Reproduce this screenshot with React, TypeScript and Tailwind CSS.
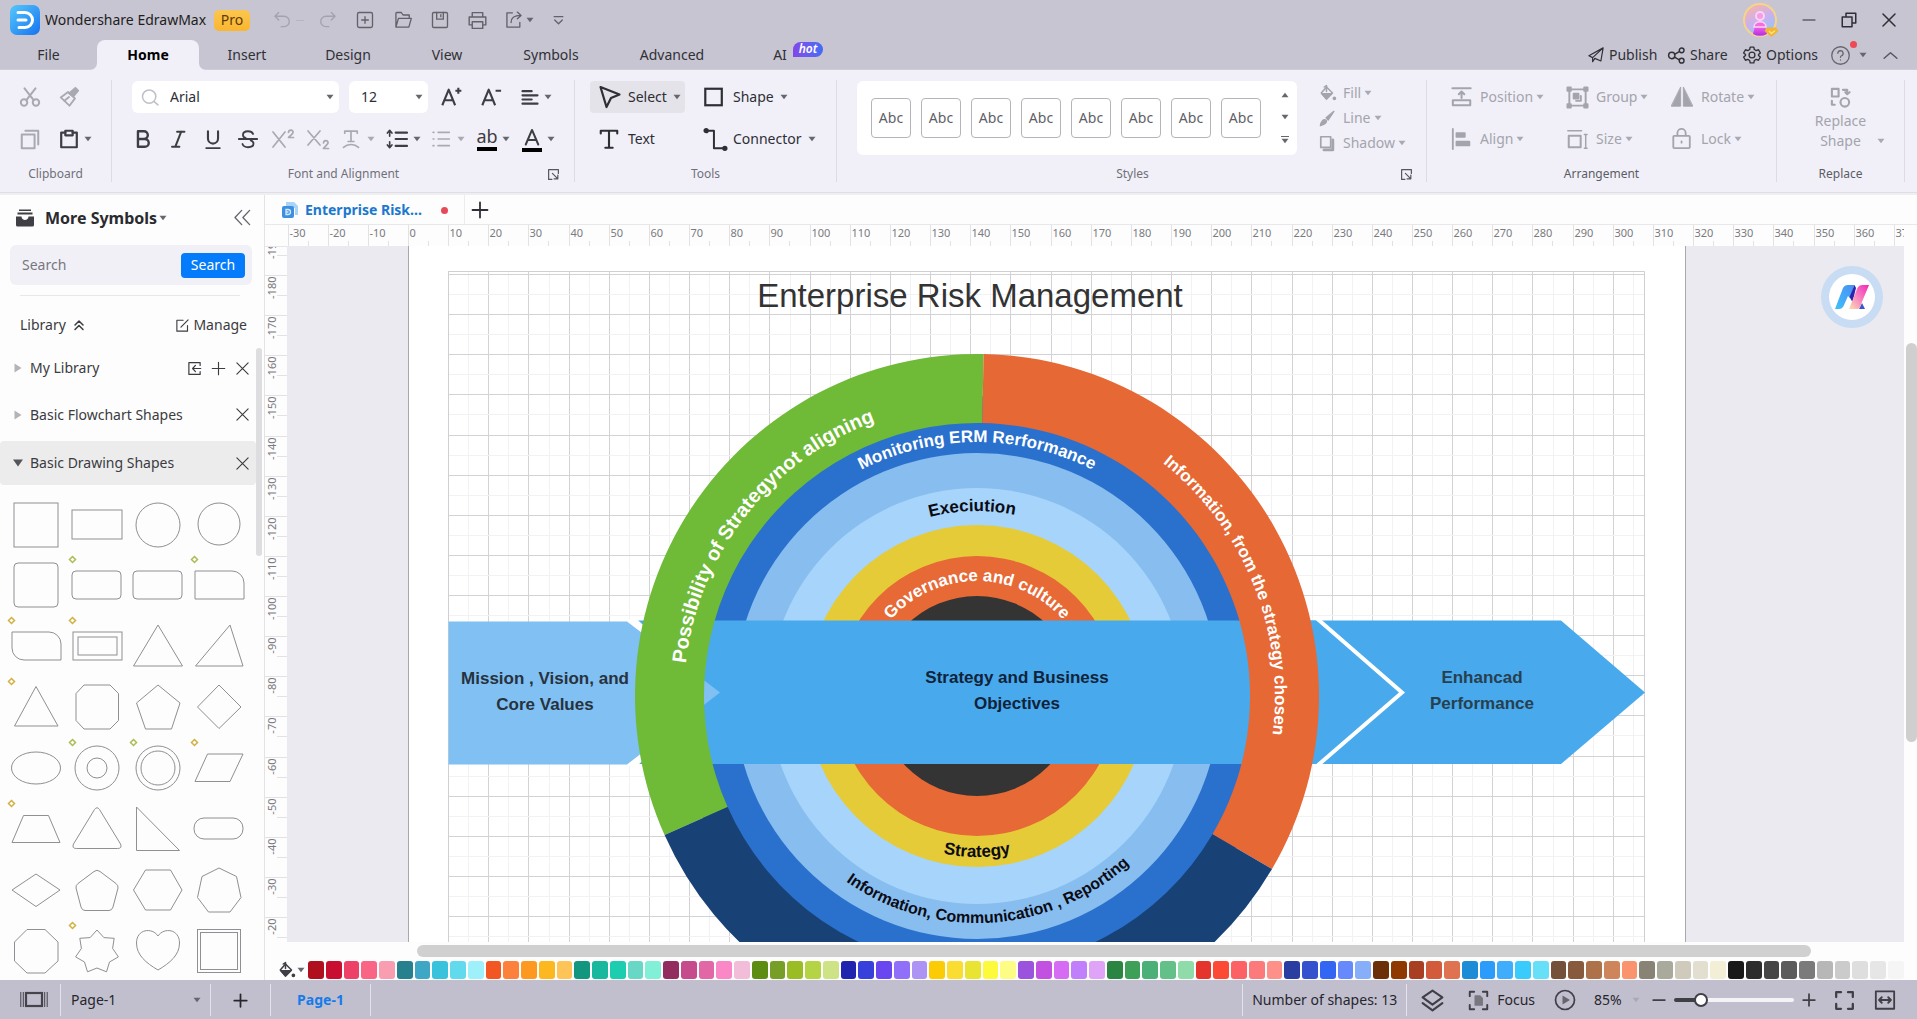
import React from "react";
import type { ReactNode } from "react";

/* ---------- small building blocks ---------- */

function Caret({ dim = false, up = false }: { dim?: boolean; up?: boolean }) {
  return (
    <svg width="8" height="6" viewBox="0 0 8 6" className={dim ? "shrink-0 text-[#a9a9b3]" : "shrink-0 text-[#66666e]"} aria-hidden="true">
      <path d={up ? "M0.5 5.2h7L4 0.8z" : "M0.5 0.8h7L4 5.2z"} fill="currentColor" />
    </svg>
  );
}

function Icon({ size = 22, w = 1.6, children, className = "" }: { size?: number; w?: number; children: ReactNode; className?: string }) {
  return (
    <svg
      width={size}
      height={size}
      viewBox="0 0 24 24"
      fill="none"
      stroke="currentColor"
      strokeWidth={w}
      strokeLinecap="round"
      strokeLinejoin="round"
      className={"shrink-0 " + className}
      aria-hidden="true"
    >
      {children}
    </svg>
  );
}

const SANS = 'font-["Noto_Sans",sans-serif]';

function IconButton({ label, className, children, disabled }: { label: string; className: string; children: ReactNode; disabled?: boolean }) {
  return (
    <button aria-label={label} disabled={disabled} className={"flex h-8 shrink-0 items-center " + (disabled ? "text-[#a9a9b1] " : "text-[#3d3d44] ") + className}>
      {children}
    </button>
  );
}

function Launcher() {
  return (
    <button aria-label="More settings" className="text-[#55555c]">
      <Icon size={13} w={2.2}>
        <path d="M21 10V3H3v18h6M10 10l10 10M20 13v7h-7" />
      </Icon>
    </button>
  );
}

/* ---------- title bar ---------- */

function TitleBar() {
  return (
    <header className="flex h-10 shrink-0 items-center pl-[10px] text-[#62626a]">
      <svg width="30" height="32" viewBox="0 0 30 32" aria-hidden="true">
        <defs>
          <linearGradient id="logo" x1="0" y1="0" x2="1" y2="1">
            <stop offset="0" stopColor="#55c8fb" />
            <stop offset="1" stopColor="#1673f0" />
          </linearGradient>
        </defs>
        <rect x="0" y="1" width="30" height="30" rx="7" fill="url(#logo)" />
        <path d="M8 8.5h7a7.5 7.5 0 0 1 0 15H9M8 16h8" fill="none" stroke="#fff" strokeWidth="3" strokeLinecap="round" />
      </svg>
      <h1 className="ml-[5px] w-[160px] whitespace-nowrap text-sm text-[#1d1d22]">Wondershare EdrawMax</h1>
      <span className="ml-[9px] flex h-[21px] w-9 items-center justify-center rounded-[5px] bg-gradient-to-b from-[#fbc64f] to-[#fbb62c] text-sm text-[#5e3a0c]">Pro</span>
      <button aria-label="Undo" className="ml-[22px] flex w-[38px] items-center gap-1 text-[#a3a2ad]">
        <Icon size={20}><path d="M8 3L3.500 7.500 8 12M4 7.500h10.500a5.500 5.500 0 0 1 0 12.500H11" /></Icon>
        <span className="h-px w-2 bg-[#b5b4c0]" />
      </button>
      <button aria-label="Redo" className="ml-[8px] w-[37px] text-[#a3a2ad]">
        <Icon size={20}><path d="M16 3l4.500 4.500L16 12M20 7.500H9.500a5.500 5.500 0 0 0 0 12.500H13" /></Icon>
      </button>
      <button aria-label="New" className="w-[38px]">
        <Icon size={20}><rect x="3" y="3" width="18" height="18" rx="2" /><path d="M12 8v8M8 12h8" /></Icon>
      </button>
      <button aria-label="Open" className="w-[37px]">
        <Icon size={20}><path d="M3.500 20.500V4a1 1 0 0 1 1-1H10l2 3h7.500v4M3.500 20.500L6.500 10H22l-3 10.500z" /></Icon>
      </button>
      <button aria-label="Save" className="w-[37px]">
        <Icon size={20}><rect x="3" y="3" width="18" height="18" rx="1.500" /><path d="M8 3v8h8V3M13 5.500v2.500" /></Icon>
      </button>
      <button aria-label="Print" className="w-[37px]">
        <Icon size={21}><path d="M6 8V3h12v5M6 17H2.500V8h19v9H18M6 13.500h12V21H6z" /></Icon>
      </button>
      <button aria-label="Export" className="flex w-[48px] items-center gap-[2px]">
        <Icon size={20}><path d="M10 3.500H3.500v17H19V15M8.500 15c0-6 4-8.500 11.500-8.500M16 2.500l4.500 4L16 10.500" /></Icon>
        <Caret />
      </button>
      <button aria-label="Customize quick access">
        <Icon size={13} w={2.4}><path d="M4 5h16M5 11l7 7 7-7" /></Icon>
      </button>

      <div className="flex-1" />
      <button aria-label="Account" className="mr-5">
        <svg width="38" height="38" viewBox="0 0 38 38" aria-hidden="true">
          <defs>
            <linearGradient id="avatar" x1="0.2" y1="0" x2="0.7" y2="1">
              <stop offset="0" stopColor="#fbb3a5" />
              <stop offset="0.5" stopColor="#c9b1ee" />
              <stop offset="1" stopColor="#8fc8f8" />
            </linearGradient>
            <linearGradient id="torso" x1="0" y1="0" x2="0" y2="1">
              <stop offset="0" stopColor="#f76ae0" />
              <stop offset="1" stopColor="#b42be8" />
            </linearGradient>
          </defs>
          <circle cx="18" cy="19" r="16" fill="url(#avatar)" stroke="#f6d48a" strokeWidth="2" />
          <path d="M11 33l2-8h10l2 8a15 15 0 0 1-14 0z" fill="url(#torso)" />
          <circle cx="18" cy="15" r="4" fill="#f79be6" stroke="#fbd3f4" strokeWidth="2" />
          <path d="M12 26c0-7 12-7 12 0z" fill="#f36fdc" stroke="#fbd3f4" strokeWidth="1.500" />
          <path d="M25 26.500h9l2.500 3.500-7 6-7-6z" fill="#f2b630" />
          <path d="M27 30l2.500 2.500 3.500-3" fill="none" stroke="#fbe08a" strokeWidth="1.500" />
        </svg>
      </button>
      <div className="flex w-[117px] items-center justify-between pr-[19px] text-[#2f2f36]">
        <button aria-label="Minimize"><Icon size={18}><path d="M4 12h16" /></Icon></button>
        <button aria-label="Restore"><Icon size={18} w={2}><path d="M3 8h13v13H3zM8 8V3h13v13h-5" /></Icon></button>
        <button aria-label="Close"><Icon size={18} w={2}><path d="M4 4l16 16M20 4L4 20" /></Icon></button>
      </div>
    </header>
  );
}

/* ---------- menu tabs ---------- */

function MenuTabs() {
  const item = "h-[30px] shrink-0 pt-px text-center text-sm text-[#303037]";
  return (
    <nav className="flex h-[30px] shrink-0 items-center border-b border-[#cfccd8]">
      <button className={item + " w-[97px]"}>File</button>
      <button className="relative h-[30px] w-[102px] shrink-0 rounded-t-lg bg-[#f1f0f8] pt-px text-center text-sm font-bold text-black">
        <svg width="7" height="7" viewBox="0 0 7 7" className="absolute -left-[7px] bottom-0" aria-hidden="true"><path d="M7 0v7H0A7 7 0 0 0 7 0z" fill="#f1f0f8" /></svg>
        Home
        <svg width="7" height="7" viewBox="0 0 7 7" className="absolute -right-[7px] bottom-0" aria-hidden="true"><path d="M0 0v7h7A7 7 0 0 1 0 0z" fill="#f1f0f8" /></svg>
      </button>
      <button className={item + " w-[96px]"}>Insert</button>
      <button className={item + " w-[106px]"}>Design</button>
      <button className={item + " w-[92px]"}>View</button>
      <button className={item + " w-[116px]"}>Symbols</button>
      <button className={item + " w-[126px]"}>Advanced</button>
      <button className={item + " relative w-[90px]"}>
        AI
        <span className="absolute left-[58px] top-[2px] flex h-[15px] w-[30px] items-center justify-center rounded-full rounded-bl-none bg-gradient-to-r from-[#8247ea] to-[#3f6df5] text-xs font-semibold italic text-white">hot</span>
      </button>
      <div className="flex-1" />
      <div className="flex items-center pr-[18px] pt-px text-sm text-[#303037]">
        <button className="flex w-[80px] items-center gap-1">
          <Icon size={18}><path d="M21.500 2.500L2.500 13l5 2.500M21.500 2.500L18.500 20l-8-3.500M21.500 2.500L7.500 15.500V21l3-4.500" /></Icon>
          Publish
        </button>
        <button className="flex w-[75px] items-center gap-1">
          <Icon size={19} w={1.8}><circle cx="6" cy="12" r="4" /><circle cx="18.500" cy="5.500" r="3" /><circle cx="18.500" cy="18.500" r="3" /><path d="M9.500 10.500l6-3.500M9.500 14l6 3.500" /></Icon>
          Share
        </button>
        <button className="flex w-[88px] items-center gap-1">
          <Icon size={20}><path d="M9.800 2.500h4.400l.6 2.900 2.200 1.300 2.800-1 2.200 3.800-2.200 1.900v1.200l2.200 1.900-2.200 3.800-2.800-1-2.200 1.300-.6 2.900H9.800l-.6-2.900L7 17.300l-2.800 1L2 14.500l2.200-1.900v-1.200L2 9.500l2.200-3.800 2.800 1 2.200-1.300z" /><circle cx="12" cy="12" r="3.500" /></Icon>
          Options
        </button>
        <button aria-label="Help" className="relative flex w-[52px] items-center gap-2 text-[#66666e]">
          <Icon size={21} w={1.5}><circle cx="12" cy="12" r="10" /><path d="M9 9.500a3 3 0 1 1 4.200 2.800c-.9.400-1.200.9-1.200 1.700M12 17v.2" /></Icon>
          <span className="absolute left-[20px] top-[-4px] size-[7px] rounded-full bg-[#ee4a56]" />
          <Caret />
        </button>
        <button aria-label="Collapse ribbon" className="text-[#55555c]">
          <Icon size={17} w={2}><path d="M3 16l9-8 9 8" /></Icon>
        </button>
      </div>
    </nav>
  );
}

/* ---------- ribbon ---------- */

function Divider() {
  return <div className="my-[10px] w-px shrink-0 bg-[#dddce5]" />;
}

function GroupLabel({ children, dark = false }: { children: ReactNode; dark?: boolean }) {
  return <div className={"h-5 text-center text-xs leading-5 " + (dark ? "text-[#5c5c64]" : "text-[#707078]")}>{children}</div>;
}

function ToolLabel({ label, icon, caret = true, className = "" }: { label: string; icon: ReactNode; caret?: boolean; className?: string }) {
  return (
    <button className={"flex h-8 items-center text-sm text-[#2e2e35] " + className}>
      <span className="flex w-[30px] justify-start">{icon}</span>
      {label}
      {caret && <span className="ml-[6px] flex"><Caret /></span>}
    </button>
  );
}

function DimLabel({ label, icon, className = "" }: { label: string; icon: ReactNode; className?: string }) {
  return (
    <button disabled className={"flex items-center text-sm text-[#a4a4ad] " + className}>
      {icon}
      <span>{label}</span>
      <span className="ml-[3px] flex"><Caret dim /></span>
    </button>
  );
}

function Ribbon() {
  return (
    <section aria-label="Home ribbon" className="flex h-[123px] shrink-0 border-b border-[#dfdfe4] bg-[#f1f0f8]">
      {/* Clipboard */}
      <div className="flex w-[111px] shrink-0 flex-col pt-[11px]">
        <div className="flex pl-[19px]">
          <IconButton label="Cut" className="w-[39px]" disabled>
            <Icon size={22} w={2.2}><circle cx="5.500" cy="18" r="3.500" /><circle cx="18.500" cy="18" r="3.500" /><path d="M8 15.500L18 2.500M16 15.500L6 2.500" /></Icon>
          </IconButton>
          <IconButton label="Format painter" className="w-8" disabled>
            <Icon size={22} w={2}><path d="M12 8l7-6 3 3-5.500 6.500z" fill="currentColor" /><path d="M3 12.500l8-6 7.500 7-6 8z" /><path d="M7 16l5-4" /></Icon>
          </IconButton>
        </div>
        <div className="mt-[10px] flex pl-[19px]">
          <IconButton label="Copy" className="w-[39px]" disabled>
            <Icon size={22} w={2.2}><path d="M3 7h14v15H3zM7 3h14v15" /></Icon>
          </IconButton>
          <IconButton label="Paste" className="w-[40px] gap-1">
            <Icon size={22} w={2.4}><path d="M8 5H3.500v16h17V5H16" /><path d="M8 3h8v5H8z" /></Icon>
            <Caret />
          </IconButton>
        </div>
        <div className="mt-[9px]"><GroupLabel>Clipboard</GroupLabel></div>
      </div>
      <Divider />

      {/* Font and alignment */}
      <div className="flex w-[462px] shrink-0 flex-col pt-[11px]">
        <div className="flex items-center pl-5">
          <div className="flex h-8 w-[207px] items-center rounded-md bg-white pl-2 pr-[5px]">
            <span className="text-[#c0c0c8]"><Icon size={20} w={1.8}><circle cx="11" cy="11.500" r="8" /><path d="M17 17.500l4.500 4" /></Icon></span>
            <input aria-label="Font family" defaultValue="Arial" className="ml-[10px] w-full min-w-0 bg-transparent text-sm text-[#2e2e35] outline-none" />
            <Caret />
          </div>
          <div className="ml-[10px] flex h-8 w-[79px] items-center rounded-md bg-white pr-[5px]">
            <select aria-label="Font size" className="w-full appearance-none bg-transparent pl-3 text-sm text-[#2e2e35] outline-none">
              <option>12</option>
              <option>14</option>
            </select>
            <Caret />
          </div>
          <IconButton label="Grow font" className="ml-3 w-10">
            <Icon size={22} w={2.3}><path d="M2.500 21L9.500 4l7 17M5 15.500h9M20 2v6.500M16.800 5.200h6.500" strokeLinecap="butt" /></Icon>
          </IconButton>
          <IconButton label="Shrink font" className="w-10">
            <Icon size={22} w={2.3}><path d="M2.500 21L9.500 4l7 17M5 15.500h9M17 5.200h6" strokeLinecap="butt" /></Icon>
          </IconButton>
          <IconButton label="Paragraph alignment" className="gap-1">
            <Icon size={20} w={2.6}><path d="M3 5h11M3 10h18M3 15h11M3 20h18" /></Icon>
            <Caret />
          </IconButton>
        </div>
        <div className="mt-[10px] flex items-center pl-[13px]">
          <IconButton label="Bold" className="w-[35px] justify-center"><Icon size={22} w={2.6}><path d="M6.500 3.500h6.500a4 4 0 0 1 0 8.500H6.500zM6.500 12h7.500a4.200 4.200 0 0 1 0 8.500H6.500z" /></Icon></IconButton>
          <IconButton label="Italic" className="w-[35px] justify-center"><Icon size={22} w={2.2}><path d="M11 4h8M5.500 20.500h8M15.500 4L9 20.500" /></Icon></IconButton>
          <IconButton label="Underline" className="w-[35px] justify-center"><Icon size={22} w={2.3}><path d="M6.500 3.500v8a5.500 5.500 0 0 0 11 0v-8" /><path d="M4.500 22h15" strokeWidth="1.800" /></Icon></IconButton>
          <IconButton label="Strikethrough" className="w-[35px] justify-center"><Icon size={22} w={2}><path d="M17.500 6.500c-1-2.300-3-3-5.500-3-3.500 0-5.500 1.700-5.500 4 0 1.500 1 2.700 3 3.500M2 12h20M15 13.500c2 .8 3 2 3 3.500 0 2.500-2.500 4-6 4-3 0-5.200-1.200-6-3.500" /></Icon></IconButton>
          <IconButton label="Superscript" className="w-[35px] justify-center" disabled><Icon size={24} w={1.7}><path d="M2 5l12 15M14 5L2 20M17.500 5.500c.3-3.300 5-2.800 4.500 0-.3 1.700-3 3-4.500 5h5" /></Icon></IconButton>
          <IconButton label="Subscript" className="w-[35px] justify-center" disabled><Icon size={24} w={1.7}><path d="M2 4l12 14M14 4L2 18M17.500 16c.3-3.300 5-2.800 4.500 0-.3 1.700-3 3-4.500 5.500h5" /></Icon></IconButton>
          <IconButton label="Text direction" className="ml-[6px] w-[45px] gap-[6px]" disabled><Icon size={20} w={2}><path d="M4.500 5V2.500h15V5M12 2.500V15M8.500 15h7M3 22c5-4.500 13-4.500 18 0" /></Icon><Caret dim /></IconButton>
          <IconButton label="Line spacing" className="w-[45px] gap-[5px]"><Icon size={22} w={2.3}><path d="M10.500 5H23M10.500 12H23M10.500 19.500H23" /><path d="M4 3v6M4 15v6M1.500 5.500L4 2.500l2.500 3M1.500 18.500L4 21.500l2.500-3" strokeWidth="1.800" /></Icon><Caret /></IconButton>
          <IconButton label="Bullets" className="w-[46px] gap-[6px]" disabled><Icon size={20} w={2}><path d="M8.500 4H22M8.500 12H22M8.500 20H22M2.500 4h1M2.500 12h1M2.500 20h1" /></Icon><Caret dim /></IconButton>
          <IconButton label="Highlight" className="w-[45px] gap-[5px]">
            <span className="flex h-6 w-5 items-center justify-center border-b-4 border-black pb-0.5 text-[18px] leading-none">ab</span>
            <Caret />
          </IconButton>
          <IconButton label="Font color" className="gap-[5px]">
            <span className="flex h-[25px] w-5 flex-col justify-between border-b-4 border-black"><Icon size={20} w={2.4}><path d="M4.500 21L12 3.500 19.500 21M7 15.500h10" /></Icon></span>
            <Caret />
          </IconButton>
        </div>
        <div className="mt-[9px] flex items-center">
          <div className="w-[435px] pl-7"><GroupLabel>Font and Alignment</GroupLabel></div>
          <Launcher />
        </div>
      </div>
      <Divider />

      {/* Tools */}
      <div className="flex w-[261px] shrink-0 flex-col pt-[11px]">
        <div className="grid grid-cols-[113px_auto] gap-y-[10px] pl-[15px]">
          <ToolLabel label="Select" className="w-[95px] rounded-sm bg-[#e4e3ea] pl-2" icon={<Icon size={24} w={2.2}><path d="M2.500 2l19 7.500-8.500 3.500-4.500 9z" /></Icon>} />
          <ToolLabel label="Shape" icon={<Icon size={22} w={2.4}><rect x="2.500" y="3" width="18" height="18" strokeLinejoin="miter" /></Icon>} />
          <ToolLabel label="Text" caret={false} className="pl-2" icon={<Icon size={22} w={2.3}><path d="M3 6V3h18v3M12 3v18.500M8 21.500h8" /></Icon>} />
          <ToolLabel label="Connector" icon={<Icon size={25} w={1.9}><path d="M4 3.500h6.500v17H20" /><circle cx="3" cy="3.500" r="1.600" fill="currentColor" /><circle cx="21" cy="20.500" r="1.600" fill="currentColor" /></Icon>} />
        </div>
        <div className="mt-[9px]"><GroupLabel>Tools</GroupLabel></div>
      </div>
      <Divider />

      {/* Styles */}
      <div className="flex w-[589px] shrink-0 flex-col pt-[11px]">
        <div className="flex h-[74px] pl-5">
          <div className="flex w-[440px] items-center rounded-md bg-white pl-[14px]">
            <div className="flex gap-[10px]">
              {Array.from({ length: 8 }, (_, i) => (
                <button key={i} className="h-10 w-10 rounded border border-[#b4b4ba] text-sm text-[#5f5f67]">Abc</button>
              ))}
            </div>
            <div className="ml-[20px] flex h-full flex-col items-center justify-between py-[11px]">
              <button aria-label="Previous styles"><Caret up /></button>
              <button aria-label="Next styles"><Caret /></button>
              <button aria-label="All styles" className="flex flex-col items-center gap-px"><span className="h-px w-2 bg-[#66666e]" /><Caret /></button>
            </div>
          </div>
          <div className="ml-[22px] flex flex-col justify-between">
            <DimLabel label="Fill" className="h-6" icon={<span className="flex w-6"><Icon size={18} w={2}><path d="M10 4l8 8-8 8-7-8z" /><path d="M4 13h13l-7 7z" fill="currentColor" /><path d="M10 10V2L7 4" /><circle cx="20.500" cy="19" r="1.500" fill="currentColor" /></Icon></span>} />
            <DimLabel label="Line" className="h-6" icon={<span className="flex w-6"><Icon size={17} w={2}><path d="M21 2L10 11l3 3z" fill="currentColor" /><path d="M2 22c1-6 4-9 7-8s2 6-7 8z" fill="currentColor" /></Icon></span>} />
            <DimLabel label="Shadow" className="h-6" icon={<span className="flex w-6"><Icon size={17} w={2.4}><path d="M2.500 2.500h14v15h-14z" /><path d="M19.500 7v14H7" strokeWidth="4" /></Icon></span>} />
          </div>
        </div>
        <div className="mt-[9px] flex items-center">
          <div className="w-[563px] pl-7"><GroupLabel>Styles</GroupLabel></div>
          <Launcher />
        </div>
      </div>
      <Divider />

      {/* Arrangement */}
      <div className="flex w-[349px] shrink-0 flex-col pt-[11px]">
        <div className="grid grid-cols-[115px_105px_auto] gap-y-[10px] pl-6">
          <DimLabel label="Position" className="h-8" icon={<span className="flex w-[29px]"><Icon size={22} w={2.2}><path d="M1.500 2.500h20M11.500 13V7M8.500 9l3-3 3 3M2 15.500h19V21H2z" /></Icon></span>} />
          <DimLabel label="Group" className="h-8" icon={<span className="flex w-[30px]"><Icon size={23} w={2}><rect x="3.500" y="3.500" width="17" height="17" /><path d="M1.500 1.500h3.500v3.500H1.500zM19 1.500h3.500v3.500H19zM1.500 19h3.500v3.500H1.500zM19 19h3.500v3.500H19z" fill="currentColor" /><path d="M8 8h5v5H8z" fill="currentColor" /><path d="M15.500 10.500v5h-5" /></Icon></span>} />
          <DimLabel label="Rotate" className="h-8" icon={<span className="flex w-[30px]"><Icon size={22} w={1}><path d="M10.500 1.500V22H0.500zM13.500 1.500V22h10z" fill="currentColor" /></Icon></span>} />
          <DimLabel label="Align" className="h-8" icon={<span className="flex w-[29px]"><Icon size={22} w={2}><path d="M2 1v22" /><path d="M6 5.500h9v4H6zM6 15h14v4H6z" fill="currentColor" /></Icon></span>} />
          <DimLabel label="Size" className="h-8" icon={<span className="flex w-[30px]"><Icon size={22} w={2.2}><path d="M3 8.500h13v12.500H3z" /><path d="M2 3h15M21.500 7v15M20 7h3M20 22h3" strokeWidth="1.600" /></Icon></span>} />
          <DimLabel label="Lock" className="h-8" icon={<span className="flex w-[30px]"><Icon size={22} w={2}><rect x="2.500" y="8.500" width="18" height="13.500" rx="1" /><path d="M7 8V5.500a4.500 4.500 0 0 1 9 0V8M11.500 14.500v1.500" /></Icon></span>} />
        </div>
        <div className="mt-[9px]"><GroupLabel dark>Arrangement</GroupLabel></div>
      </div>
      <Divider />

      {/* Replace */}
      <div className="flex w-[127px] shrink-0 flex-col pt-[11px]">
        <button disabled className="flex h-[74px] flex-col items-center pt-[5px] text-sm leading-5 text-[#a4a4ad]">
          <Icon size={23} w={2.2}><path d="M3 3h7v8H3zM3 15.500v4h3" /><circle cx="16.500" cy="17" r="4.500" /><path d="M14.500 4h4.500v4M17 6.500l2 2 2.500-2" /></Icon>
          <span className="mt-[2px]">Replace</span>
          <span className="flex w-full items-center">
            <span className="w-[100px] pl-[27px]">Shape</span>
            <Caret dim />
          </span>
        </button>
        <div className="mt-[9px]"><GroupLabel dark>Replace</GroupLabel></div>
      </div>
      <Divider />
    </section>
  );
}

/* ---------- shape library ---------- */

function starPoints(n: number, outer: number, inner: number) {
  const out: string[] = [];
  for (let i = 0; i < n * 2; i++) {
    const r = i % 2 === 0 ? outer : inner;
    const a = (Math.PI * i) / n;
    out.push(`${(31 + r * Math.sin(a)).toFixed(1)},${(31 - r * Math.cos(a)).toFixed(1)}`);
  }
  return out.join(" ");
}

type ShapeDef = { name: string; el: ReactNode; mark?: string };
const LIME = "#aebb52";
const GOLD = "#d3b040";
const SHAPES: ShapeDef[] = [
  { name: "Square", el: <rect x="9" y="9" width="44" height="44" /> },
  { name: "Rectangle", el: <rect x="6" y="16" width="50" height="29" /> },
  { name: "Circle", el: <circle cx="31" cy="31" r="22" /> },
  { name: "Small circle", el: <circle cx="31" cy="30" r="21" /> },
  { name: "Rounded square", el: <rect x="9" y="8" width="44" height="44" rx="4" /> },
  { name: "Rounded rectangle", el: <rect x="6" y="16" width="49" height="28" rx="4" />, mark: LIME },
  { name: "Soft rectangle", el: <rect x="6" y="16" width="49" height="28" rx="4" /> },
  { name: "Single round corner", el: <path d="M7 16h37a12 12 0 0 1 12 12v16H7z" />, mark: LIME },
  { name: "Diagonal round corners", el: <path d="M7 16h37a12 12 0 0 1 12 12v16H19A12 12 0 0 1 7 32z" />, mark: GOLD },
  { name: "Frame", el: <><rect x="7" y="16" width="49" height="28" /><rect x="12" y="21" width="39" height="18" /></>, mark: GOLD },
  { name: "Triangle", el: <path d="M31 9L55.500 50h-49z" /> },
  { name: "Scalene triangle", el: <path d="M42 9l13 41H7.500z" /> },
  { name: "Isosceles triangle", el: <path d="M31 9.500L53 49H9.500z" />, mark: GOLD },
  { name: "Snipped square", el: <path d="M18 8h26l8.500 8.500v27L44 52H18l-8-8.500v-27z" /> },
  { name: "Pentagon", el: <path d="M31 8l22 18-8.500 26h-26L9.500 26z" /> },
  { name: "Diamond", el: <path d="M31 8l22 22-22 21.500L9.500 30z" /> },
  { name: "Ellipse", el: <ellipse cx="31" cy="30" rx="24.500" ry="16" /> },
  { name: "Donut", el: <><circle cx="31" cy="30" r="22" /><circle cx="31" cy="30" r="10" /></>, mark: LIME },
  { name: "Double circle", el: <><circle cx="31" cy="30" r="22" /><circle cx="31" cy="30" r="17" /></>, mark: LIME },
  { name: "Parallelogram", el: <path d="M19.500 16H55L42 43.500H7z" />, mark: GOLD },
  { name: "Trapezoid", el: <path d="M18.500 16.500h25L55 43.500H7z" />, mark: GOLD },
  { name: "Rounded triangle", el: <path d="M28.500 10.500q2.500-3.500 5 0L54.500 45q2 4.500-3 4.500h-41q-5 0-3-4.500z" /> },
  { name: "Right triangle", el: <path d="M9.500 8v43.500h43z" /> },
  { name: "Stadium", el: <rect x="6" y="19" width="49" height="21" rx="10" /> },
  { name: "Flat diamond", el: <path d="M31 14l24 16-24 16.500L7 30z" /> },
  { name: "Rounded pentagon", el: <path d="M28 11.500q3-2.500 6 0l16 12q2.500 2 2 4.500l-5 19q-1 3.500-4 3.500H19q-3 0-4-3.500L10 28q-.500-2.500 2-4.500z" /> },
  { name: "Hexagon", el: <path d="M18.500 10h25L55 30 43.500 50h-25L6.500 30z" /> },
  { name: "Heptagon", el: <path d="M31 8l17.500 8.500 4.500 21L42 52H20.500L9.500 37.500 14 16.500z" /> },
  { name: "Octagon", el: <path d="M22 8.500h18L53 21v19L40 52H22L9.500 40V21z" /> },
  { name: "Star", el: <polygon points={starPoints(7, 22, 16)} />, mark: GOLD },
  { name: "Heart", el: <path d="M31 49C19 42 9.500 34 9.500 22 9.500 8 25 6 31 15c6-9 21.500-7 21.500 7C52.500 34 43 42 31 49z" /> },
  { name: "Double square", el: <><rect x="9.500" y="8.500" width="43" height="43" /><rect x="12.500" y="11.500" width="37" height="37" /></> },
];

function Sidebar() {
  const row = "flex shrink-0 items-center text-sm text-[#3b3b40]";
  const close = <Icon size={15} w={1.8}><path d="M3 3l18 18M21 3L3 21" /></Icon>;
  return (
    <aside className="flex w-[265px] shrink-0 flex-col border-r border-[#e3e3e6] bg-[#fdfdfd]">
      <div className="flex h-[45px] shrink-0 items-center pl-[15px] pr-[12px]">
        <svg width="20" height="18" viewBox="0 0 20 18" className="text-[#3f3f45]" aria-hidden="true">
          <path d="M4 0.500h12v1.500H4zM2.500 3.500h15V5.500h-15zM1 7.500h5.500c0 4.500 7 4.500 7 0H19V16a1.500 1.500 0 0 1-1.500 1.500h-15A1.500 1.500 0 0 1 1 16z" fill="currentColor" />
        </svg>
        <h2 className="ml-[10px] mr-[2px] whitespace-nowrap text-base font-bold text-[#2a2a2f]">More Symbols</h2>
        <Caret />
        <div className="flex-1" />
        <button aria-label="Collapse panel" className="text-[#66666e]">
          <Icon size={19} w={1.7}><path d="M11 3l-8.500 9 8.500 9M21 3l-8.500 9 8.500 9" /></Icon>
        </button>
      </div>
      <form className="ml-[10px] mr-3 mt-[5px] flex h-10 shrink-0 items-center rounded-md bg-[#f1f0f6] pl-3 pr-[7px]" onSubmit={(e) => e.preventDefault()}>
        <input aria-label="Search symbols" placeholder="Search" className="w-full min-w-0 bg-transparent text-sm text-[#3b3b40] outline-none placeholder:text-[#77777f]" />
        <button className="h-[25px] w-16 shrink-0 rounded bg-[#047bfb] text-sm text-white">Search</button>
      </form>
      <div className="ml-5 mr-6 mt-[10px] h-px shrink-0 bg-[#e8e8eb]" />
      <div className={row + " mt-[6px] h-[46px] pl-5 pr-[17px]"}>
        <button className="flex items-center gap-[7px]">
          Library
          <Icon size={12} w={3}><path d="M4 12l8-8 8 8M4 21l8-8 8 8" /></Icon>
        </button>
        <div className="flex-1" />
        <button className="flex items-center gap-[3px]">
          <Icon size={15} w={1.800}><path d="M13 3.500H3v17.500h17V12M9.500 14.500L21 3" /></Icon>
          Manage
        </button>
      </div>
      <div className="relative flex min-h-0 flex-1 flex-col overflow-hidden">
        <div className={row + " h-10 pl-[14px] pr-[14px]"}>
          <svg width="8" height="10" viewBox="0 0 8 10" className="mr-2 text-[#b3b3b8]" aria-hidden="true"><path d="M0.500 0.500v9L7.500 5z" fill="currentColor" /></svg>
          My Library
          <div className="flex-1" />
          <button aria-label="Import library" className="mr-[9px]"><Icon size={15} w={1.900}><path d="M21 7V2.500H3v19h18V17M22 12H9M13.500 7L9 12l4.500 5" /></Icon></button>
          <button aria-label="Add library" className="mr-[9px]"><Icon size={15} w={1.800}><path d="M12 2v20M2 12h20" /></Icon></button>
          <button aria-label="Close My Library">{close}</button>
        </div>
        <div className={row + " h-[53px] pl-[14px] pr-[14px]"}>
          <svg width="8" height="10" viewBox="0 0 8 10" className="mr-2 text-[#b3b3b8]" aria-hidden="true"><path d="M0.500 0.500v9L7.500 5z" fill="currentColor" /></svg>
          Basic Flowchart Shapes
          <div className="flex-1" />
          <button aria-label="Close Basic Flowchart Shapes">{close}</button>
        </div>
        <div className={row + " mr-2 h-[44px] rounded bg-[#ececed] pl-[13px] pr-[6px]"}>
          <svg width="10" height="8" viewBox="0 0 10 8" className="mr-[7px] text-[#55555c]" aria-hidden="true"><path d="M0 0.500h10L5 7.500z" fill="currentColor" /></svg>
          Basic Drawing Shapes
          <div className="flex-1" />
          <button aria-label="Close Basic Drawing Shapes">{close}</button>
        </div>
        <div className="mt-[9px] grid grid-cols-[repeat(4,61px)] pl-[5px]">
          {SHAPES.map((s) => (
            <button key={s.name} aria-label={s.name} className="h-[61px]">
              <svg width="61" height="61" viewBox="0 0 61 61" fill="none" stroke="#8f8f94" strokeWidth="1">
                {s.el}
                {s.mark && <path d="M6.500 1.500l3 3-3 3-3-3z" stroke={s.mark} strokeWidth="1.500" />}
              </svg>
            </button>
          ))}
        </div>
        <div className="absolute right-[2px] top-0 h-[208px] w-[6px] rounded-full bg-[#dedee1]" />
      </div>
    </aside>
  );
}

/* ---------- rulers ---------- */

const PITCH = 40.16;

function HorizontalRuler() {
  const marks = Array.from({ length: 41 }, (_, i) => i - 3);
  return (
    <svg className="ml-[22px] h-[21px] min-w-0 flex-1" fontFamily="Noto Sans" fontSize="11" fill="#7a7a80" aria-label="Horizontal ruler">
      {marks.map((m) => {
        const x = Math.round(121 + m * PITCH) + 0.5;
        return (
          <g key={m}>
            <path d={`M${x} 0V21`} stroke="#e2e2e5" />
            <path d={`M${x + 20} 16V21`} stroke="#e2e2e5" />
            <text x={x + 1} y="12">{m * 10}</text>
          </g>
        );
      })}
    </svg>
  );
}

function VerticalRuler() {
  const marks = Array.from({ length: 18 }, (_, i) => i - 19);
  return (
    <svg className="w-[22px] shrink-0 self-stretch border-t border-[#e6e6e9] bg-[#fdfdfd]" fontFamily="Noto Sans" fontSize="11" fill="#7a7a80" aria-label="Vertical ruler">
      {marks.map((m) => {
        const y = Math.round(28 + (m + 18) * 40.13) + 0.5;
        return (
          <g key={m}>
            <path d={`M0 ${y}H22`} stroke="#e2e2e5" />
            <path d={`M12 ${y + 20}H22`} stroke="#e2e2e5" />
            <text transform={`translate(11 ${y + 1}) rotate(-90)`} textAnchor="end">{m * 10}</text>
          </g>
        );
      })}
    </svg>
  );
}

/* ---------- diagram ---------- */

const CX = 977;
const CY = 696;

function polar(r: number, deg: number) {
  const a = (deg * Math.PI) / 180;
  return `${(CX + r * Math.sin(a)).toFixed(2)} ${(CY - r * Math.cos(a)).toFixed(2)}`;
}

function ringSegment(r0: number, r1: number, a0: number, a1: number) {
  const big = a1 - a0 > 180 ? 1 : 0;
  return `M${polar(r1, a0)}A${r1} ${r1} 0 ${big} 1 ${polar(r1, a1)}L${polar(r0, a1)}A${r0} ${r0} 0 ${big} 0 ${polar(r0, a0)}Z`;
}

function CurvedText({ id, r, at, size, fill, under = false, children }: { id: string; r: number; at: number; size: number; fill: string; under?: boolean; children: string }) {
  const d = under
    ? `M${polar(r, at + 85)}A${r} ${r} 0 0 0 ${polar(r, at - 85)}`
    : `M${polar(r, at - 85)}A${r} ${r} 0 0 1 ${polar(r, at + 85)}`;
  return (
    <>
      <path id={id} d={d} fill="none" />
      <text fontSize={size} fontWeight="bold" fill={fill} textAnchor="middle">
        <textPath href={"#" + id} startOffset="50%">{children}</textPath>
      </text>
    </>
  );
}

function Diagram() {
  const left = 408;
  const cols = Array.from({ length: 60 }, (_, i) => Math.round(left + PITCH + (i * PITCH) / 2) + 0.5).filter((x) => x < 1644);
  const rows = Array.from({ length: 36 }, (_, i) => Math.round(274 + i * 20.065) + 0.5);
  return (
    <svg className="h-full w-full" fontFamily="Liberation Sans" aria-label="Enterprise Risk Management diagram">
      <g transform="translate(-287 -246)">
        <rect x="408.500" y="200" width="1277" height="900" fill="#fff" stroke="#a8a8ad" />
        {cols.map((x, i) => <path key={x} d={`M${x} 271V960`} stroke={i % 2 === 0 ? "#d3d3d6" : "#f2f2f4"} />)}
        {rows.map((y, i) => <path key={y} d={`M448 ${y}H1645`} stroke={i % 2 === 0 ? "#d3d3d6" : "#f2f2f4"} />)}
        <path d="M448.500 960V271.500H1644.500V960" fill="none" stroke="#d0d0d4" />

        <text x="970" y="307" fontSize="33" fill="#333" textAnchor="middle">Enterprise Risk Management</text>

        <circle cx={CX} cy={CY} r="300" fill="#2a70cd" />
        <circle cx={CX} cy={CY} r="243" fill="#87bdef" />
        <circle cx={CX} cy={CY} r="208" fill="#a6d4fa" />
        <circle cx={CX} cy={CY} r="171" fill="#e5cb38" />
        <circle cx={CX} cy={CY} r="140" fill="#e76936" />
        <circle cx={CX} cy={CY} r="100" fill="#343434" />

        <path d="M1300 620.500H1561L1645 692.500 1561 764H1300z" fill="#48a9ec" />
        <path d="M638 620.500H1319L1402 692.500 1319 764H638L660 745V640z" fill="#48a9ec" />
        <path d="M1317 618.500L1402 692.500 1317 766" fill="none" stroke="#fff" strokeWidth="4" />
        <path d="M627 619.500H637L664 644V741L637 766H627z" fill="#fff" />
        <path d="M448.500 621.500H627L720 692.500 627 764.500H448.500z" fill="#80c0f3" />

        <path d={ringSegment(273, 342, -114, 1.1)} fill="#6fba36" />
        <path d={ringSegment(273, 342, 1.1, 120.400)} fill="#e66835" />
        <path d={ringSegment(273, 342, 120.400, 246)} fill="#184275" />

        <CurvedText id="arc-possibility" r={293} at={-52} size={20} fill="#fff">Possibility of Strategynot aligning</CurvedText>
        <CurvedText id="arc-information" r={298} at={68} size={17} fill="#fff">Information, from the strategy chosen</CurvedText>
        <CurvedText id="arc-monitoring" r={254} at={0} size={17} fill="#fff">Monitoring ERM Rerformance</CurvedText>
        <CurvedText id="arc-execution" r={185} at={-1.5} size={17} fill="#0b0b14">Execiution</CurvedText>
        <CurvedText id="arc-governance" r={115} at={0} size={17} fill="#fff">Governance and culture</CurvedText>
        <CurvedText id="arc-strategy" r={161} at={180} size={17} fill="#0b0b14" under>Strategy</CurvedText>
        <CurvedText id="arc-reporting" r={227} at={176.500} size={16} fill="#0b0b14" under>Information, Communication , Reporting</CurvedText>

        <g fontSize="17" fontWeight="bold" textAnchor="middle">
          <g fill="#27323d">
            <text x="545" y="684">Mission , Vision, and</text>
            <text x="545" y="710">Core Values</text>
          </g>
          <g fill="#10233a">
            <text x="1017" y="683">Strategy and Business</text>
            <text x="1017" y="709">Objectives</text>
          </g>
          <g fill="#27404f">
            <text x="1482" y="683">Enhancad</text>
            <text x="1482" y="709">Performance</text>
          </g>
        </g>
      </g>
    </svg>
  );
}

/* ---------- palette ---------- */

const PALETTE = (
  "#b0101e #c90f31 #ee4168 #f86585 #f99eb0 #27808e #3ea7c5 #38c2dc #62daee #9ef0fb " +
  "#f15623 #fb813c #fd9820 #fdb71f #fec457 #129680 #17b89e #1dcdb0 #69d7c6 #82efd7 " +
  "#942d5f #c54b8c #e167a6 #fa87c6 #f1bdd9 #5d8c13 #779f28 #9abc25 #b5d445 #cde386 " +
  "#2024ae #3840dc #6946f0 #9070f8 #ad93f3 #fbcc06 #fbdc30 #e9e431 #fdf93b #fdfc84 " +
  "#9b52dc #c250e0 #d66bf4 #c080fb #dfa3f7 #2a8543 #3d9f58 #4bb077 #62c088 #8fdcaa " +
  "#e5342b #fc4a35 #fb6165 #fd7a7c #fd9089 #2a3ea2 #3452cd #3466f4 #668afc #87aef8 " +
  "#6b3009 #8f3900 #a93f22 #d25b3c #df7351 #1d8cd6 #2c9cfb #3fadfb #38cbfb #66dff8 " +
  "#75503a #885a3d #ae724a #cf855c #f9946e #898375 #aaaa9c #cfcabb #e3dfd0 #f3eed6 " +
  "#191919 #2d2d2d #464646 #5b5b5b #7b7b7b #b7b7b7 #cbcbcb #dedede #e6e6e6 #f5f5f5"
).split(" ");

function Palette() {
  return (
    <div className="flex h-5 shrink-0 items-center pl-[13px] pr-[13px]">
      <button aria-label="Fill color" className="flex w-[30px] shrink-0 items-center gap-px text-[#3f3f45]">
        <Icon size={18} w={2}><path d="M10 4l8 8-8 8-7-8z" /><path d="M4 13h13l-7 7z" fill="currentColor" /><path d="M10 10V2L7 4" /><circle cx="20.500" cy="19" r="1.500" fill="currentColor" /></Icon>
        <Caret />
      </button>
      <div className="flex min-w-0 flex-1 gap-[2px]">
        {PALETTE.map((c, i) => (
          <button key={i} aria-label={"Color " + c} className="h-[18px] min-w-0 flex-1 rounded-[3px]" style={{ backgroundColor: c }} />
        ))}
      </div>
    </div>
  );
}

/* ---------- workspace ---------- */

function Workspace() {
  return (
    <main className="flex min-w-0 flex-1 flex-col bg-[#fdfdfd]">
      <div className="flex h-[30px] shrink-0 items-center border-b border-[#e8e8eb] pl-4">
        <button className="flex h-full w-[184px] items-center border-r border-[#ececef] pt-px text-sm font-bold text-[#1a78cf]">
          <svg width="18" height="18" viewBox="0 0 18 18" className="mr-[6px]" aria-hidden="true">
            <path d="M5 1h8l4 4v9h-3V7H5z" fill="#a9d3f7" />
            <rect x="1" y="5" width="12" height="12" rx="2" fill="#3d8fe0" />
            <path d="M5 8.500h2a2.500 2.500 0 0 1 0 5H5zM5 11h2.500" fill="none" stroke="#d5eafc" strokeWidth="1.300" />
          </svg>
          Enterprise Risk...
          <span className="ml-auto mr-4 size-[7px] rounded-full bg-[#e8495a]" />
        </button>
        <button aria-label="New document" className="ml-[6px] text-[#2f2f36]"><Icon size={18} w={2.4}><path d="M12 2v20M2 12h20" /></Icon></button>
      </div>
      <div className="flex h-[21px] shrink-0 pr-[13px]">
        <HorizontalRuler />
      </div>
      <div className="flex min-h-0 flex-1">
        <VerticalRuler />
        <div className="relative min-w-0 flex-1 overflow-hidden bg-[#ebeaf0]">
          <Diagram />
          <button aria-label="Assistant" className="absolute right-[21px] top-5 flex size-[62px] items-center justify-center rounded-full bg-[#c8dcf3]">
            <span className="flex size-[46px] items-center justify-center rounded-full bg-white">
              <svg width="36" height="26" viewBox="0 0 36 26" aria-hidden="true">
                <defs>
                  <linearGradient id="pink" x1="1" y1="0" x2="0" y2="1">
                    <stop offset="0" stopColor="#f326b8" />
                    <stop offset="0.5" stopColor="#f87fc0" />
                    <stop offset="1" stopColor="#fbe0b0" />
                  </linearGradient>
                  <linearGradient id="sky" x1="0" y1="1" x2="1" y2="0">
                    <stop offset="0" stopColor="#3fc0fa" />
                    <stop offset="1" stopColor="#4a8df2" />
                  </linearGradient>
                </defs>
                <path d="M1 25L9 4q1.500-3 5-3h6.500L16 14l-2-2-4 9q-1.500 4-5 4z" fill="url(#sky)" />
                <path d="M20.500 1L22 4l-3.500 14-3-5z" fill="#2a25b0" />
                <path d="M25 25l3-6 3 6z" fill="#3a56c8" />
                <path d="M15 25l8-20q1.500-4 5.500-4H35l-7.500 18q-1.500 6-4.500 6z" fill="url(#pink)" />
              </svg>
            </span>
          </button>
        </div>
        <div className="flex w-[13px] shrink-0 justify-end">
          <div className="mt-[97px] h-[399px] w-[11px] rounded-full bg-[#cfcfd0]" />
        </div>
      </div>
      <div className="h-[18px] shrink-0 pl-[152px] pr-[106px] pt-[3px]">
        <div className="h-3 rounded-full bg-[#d0d0d1]" />
      </div>
      <Palette />
    </main>
  );
}

/* ---------- status bar ---------- */

function StatusBar() {
  const sep = <div className="h-8 w-px shrink-0 bg-[#e4e2ec]" />;
  return (
    <footer className="flex h-[39px] shrink-0 items-center bg-[#c1bfce] pt-px text-sm text-[#26262c]">
      <button aria-label="Page thumbnails" className="flex w-[60px] justify-center pl-2 text-[#44444b]">
        <svg width="28" height="18" viewBox="0 0 28 18" fill="none" stroke="currentColor" aria-hidden="true">
          <rect x="6" y="2" width="16" height="13" strokeWidth="2.200" />
          <path d="M0.800 1v15M3.300 1v15M24.700 1v15M27.200 1v15" strokeWidth="1" />
        </svg>
      </button>
      {sep}
      <div className="flex w-[149px] items-center pl-[10px] pr-[9px]">
        <select aria-label="Page" className="w-full appearance-none bg-transparent outline-none"><option>Page-1</option></select>
        <Caret />
      </div>
      {sep}
      <button aria-label="Add page" className="flex w-[59px] justify-center"><Icon size={15} w={2.800}><path d="M12 2v20M2 12h20" /></Icon></button>
      {sep}
      <button className="w-[99px] font-bold text-[#157bea]">Page-1</button>
      {sep}
      <div className="flex-1" />
      {sep}
      <span className="w-[163px] whitespace-nowrap pl-[9px]">Number of shapes: 13</span>
      {sep}
      <div className="flex items-center text-[#3f3f46]">
        <button aria-label="Layers" className="ml-[13px]"><Icon size={25} w={2}><path d="M12 2.500l9.500 6.500-9.500 7-9.500-7zM2.500 14.500l9.500 7 9.500-7" /></Icon></button>
        <button className="ml-[23px] flex items-center gap-2 text-[#26262c]">
          <span className="flex text-[#3f3f46]"><Icon size={21} w={2.200}><path d="M2 7V2h5M17 2h5v5M22 17v5h-5M7 22H2v-5" /><path d="M8.500 7h5l2.500 2.500V17h-7.500z" fill="#77777f" stroke="#77777f" /></Icon></span>
          Focus
        </button>
        <button aria-label="Present" className="ml-[18px]"><Icon size={24} w={1.700}><circle cx="12" cy="12" r="9.500" /><path d="M9.500 7.500l7.500 4.500-7.500 4.500z" fill="#66666e" stroke="none" /></Icon></button>
        <button className="ml-[17px] flex w-[46px] items-center justify-between text-[#26262c]">85%<Caret dim /></button>
        <button aria-label="Zoom out" className="ml-[12px]"><Icon size={14} w={3}><path d="M2 12h20" /></Icon></button>
        <input
          type="range"
          aria-label="Zoom"
          min={0}
          max={100}
          defaultValue={19}
          className="ml-2 h-4 w-[120px] appearance-none bg-transparent [&::-webkit-slider-runnable-track]:h-1 [&::-webkit-slider-runnable-track]:rounded-full [&::-webkit-slider-runnable-track]:bg-linear-to-r [&::-webkit-slider-runnable-track]:from-[#3f3f46] [&::-webkit-slider-runnable-track]:from-[20%] [&::-webkit-slider-runnable-track]:to-[#f4f3f8] [&::-webkit-slider-runnable-track]:to-[20%] [&::-webkit-slider-thumb]:-mt-[5px] [&::-webkit-slider-thumb]:size-[14px] [&::-webkit-slider-thumb]:appearance-none [&::-webkit-slider-thumb]:rounded-full [&::-webkit-slider-thumb]:border-2 [&::-webkit-slider-thumb]:border-[#3f3f46] [&::-webkit-slider-thumb]:bg-white"
        />
        <button aria-label="Zoom in" className="ml-[8px]"><Icon size={14} w={3}><path d="M12 2v20M2 12h20" /></Icon></button>
        <button aria-label="Full screen" className="ml-[18px]"><Icon size={21} w={2.600}><path d="M2.500 8V2.500H8M16 2.500h5.500V8M21.500 16v5.500H16M8 21.500H2.500V16" /></Icon></button>
        <button aria-label="Fit width" className="ml-[19px] mr-[21px]"><Icon size={22} w={2}><rect x="2" y="2.500" width="20" height="19" /><path d="M5.500 12h13M8.500 9l-3 3 3 3M15.500 9l3 3-3 3" /></Icon></button>
      </div>
    </footer>
  );
}

export default function App() {
  return (
    <div className={"flex h-screen min-h-[600px] flex-col overflow-hidden bg-[#c7c5d1] " + SANS}>
      <TitleBar />
      <MenuTabs />
      <Ribbon />
      <div className="h-[2px] shrink-0 bg-[#efeff3]" />
      <div className="flex min-h-0 flex-1">
        <Sidebar />
        <Workspace />
      </div>
      <StatusBar />
    </div>
  );
}
